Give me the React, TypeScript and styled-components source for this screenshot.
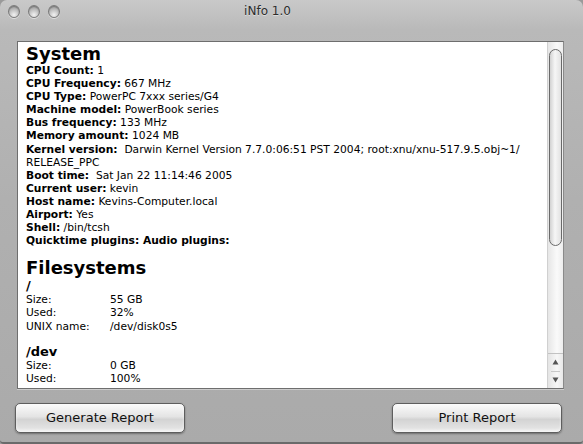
import React from 'react';
import styled, { createGlobalStyle } from 'styled-components';

const GlobalStyle = createGlobalStyle`
  html, body {
    margin: 0;
    padding: 0;
    background: #9a9a9a;
  }
  body {
    font-family: "DejaVu Sans", "Liberation Sans", sans-serif;
  }
`;

interface InfoRow {
  label: string;
  value: string;
  gap?: boolean;
}

const systemRows: InfoRow[] = [
  { label: 'CPU Count:', value: '1' },
  { label: 'CPU Frequency:', value: '667 MHz' },
  { label: 'CPU Type:', value: 'PowerPC 7xxx series/G4' },
  { label: 'Machine model:', value: 'PowerBook series' },
  { label: 'Bus frequency:', value: '133 MHz' },
  { label: 'Memory amount:', value: '1024 MB' },
];

const systemRowsAfter: InfoRow[] = [
  { label: 'Boot time:', value: 'Sat Jan 22 11:14:46 2005', gap: true },
  { label: 'Current user:', value: 'kevin' },
  { label: 'Host name:', value: 'Kevins-Computer.local' },
  { label: 'Airport:', value: 'Yes' },
  { label: 'Shell:', value: '/bin/tcsh' },
  { label: 'Quicktime plugins: Audio plugins:', value: '' },
];

interface Volume {
  mount: string;
  size: string;
  used: string;
  unix?: string;
}

const volumes: Volume[] = [
  { mount: '/', size: '55 GB', used: '32%', unix: '/dev/disk0s5' },
  { mount: '/dev', size: '0 GB', used: '100%' },
];

const App: React.FC = () => {
  return (
    <>
      <GlobalStyle />
      <Window>
        <TitleBar>
          <Lights>
            <Light />
            <Light />
            <Light />
          </Lights>
          <Title>iNfo 1.0</Title>
        </TitleBar>
        <Body>
          <TextView>
            <Scroller>
              <Heading>System</Heading>
              {systemRows.map((row) => (
                <Line key={row.label}>
                  <b>{row.label}</b> {row.value}
                </Line>
              ))}
              <Line>
                <b>Kernel version:</b>&nbsp; Darwin Kernel Version 7.7.0:06:51 PST 2004; root:xnu/xnu-517.9.5.obj~1/
                <br />
                RELEASE_PPC
              </Line>
              {systemRowsAfter.map((row) => (
                <Line key={row.label}>
                  <b>{row.label}</b>
                  {row.gap ? '\u00a0 ' : ' '}
                  {row.value}
                </Line>
              ))}
              <Heading $top={11}>Filesystems</Heading>
              {volumes.map((v, i) => (
                <VolumeBlock key={v.mount} $first={i === 0}>
                  <Mount>{v.mount}</Mount>
                  <Table>
                    <Cell>Size:</Cell>
                    <Cell>{v.size}</Cell>
                    <Cell>Used:</Cell>
                    <Cell>{v.used}</Cell>
                    {v.unix && (
                      <>
                        <Cell>UNIX name:</Cell>
                        <Cell>{v.unix}</Cell>
                      </>
                    )}
                  </Table>
                </VolumeBlock>
              ))}
            </Scroller>
            <ScrollBar>
              <Track>
                <Thumb />
              </Track>
              <Arrows>
                <Arrow>
                  <svg width="7" height="6" viewBox="0 0 7 6">
                    <path d="M3.5 0.5 L6.5 5.5 L0.5 5.5 Z" fill="#555" />
                  </svg>
                </Arrow>
                <ArrowDivider />
                <Arrow>
                  <svg width="7" height="6" viewBox="0 0 7 6">
                    <path d="M0.5 0.5 L6.5 0.5 L3.5 5.5 Z" fill="#555" />
                  </svg>
                </Arrow>
              </Arrows>
            </ScrollBar>
          </TextView>
          <ButtonRow>
            <AquaButton>Generate Report</AquaButton>
            <AquaButton>Print Report</AquaButton>
          </ButtonRow>
        </Body>
      </Window>
    </>
  );
};

const Window = styled.div`
  width: 583px;
  height: 444px;
  box-sizing: border-box;
  display: flex;
  flex-direction: column;
  background: linear-gradient(180deg, #c9c9c9 0px, #b9b9b9 30px, #b0b0b0 200px, #aaaaaa 444px);
  border-radius: 7px 7px 4px 4px;
  border-bottom: 2px solid #6a6a6a;
  overflow: hidden;
`;

const TitleBar = styled.div`
  height: 22px;
  display: flex;
  align-items: center;
  padding: 0 0 0 8px;
  flex-shrink: 0;
`;

const Lights = styled.div`
  display: flex;
  gap: 8px;
  width: 56px;
`;

const Light = styled.div`
  width: 12px;
  height: 13px;
  border-radius: 50%;
  box-sizing: border-box;
  border: 1px solid #7c7c7c;
  background: radial-gradient(circle at 50% 80%, #f2f2f2 0%, #c4c4c4 45%, #8f8f8f 100%);
  box-shadow: inset 0 1px 1px rgba(0, 0, 0, 0.25), 0 1px 0 rgba(255, 255, 255, 0.5);
`;

const Title = styled.div`
  flex: 1;
  text-align: center;
  padding-right: 112px;
  font-size: 12px;
  color: #2c2c2c;
  text-shadow: 0 1px 0 rgba(255, 255, 255, 0.45);
`;

const Body = styled.div`
  flex: 1;
  display: flex;
  flex-direction: column;
  padding: 19px 19px 0 17px;
`;

const TextView = styled.div`
  height: 346px;
  display: flex;
  background: #ffffff;
  border: 1px solid #6e6e6e;
  border-right-color: #8a8a8a;
  box-shadow: 0 1px 0 rgba(255, 255, 255, 0.4);
  overflow: hidden;
`;

const Scroller = styled.div`
  flex: 1;
  padding: 2px 0 0 8px;
  overflow: hidden;
  color: #000;
  font-size: 10.7px;
  line-height: 13.1px;
`;

const Heading = styled.div<{ $top?: number }>`
  font-size: 18px;
  font-weight: bold;
  line-height: 20px;
  margin-top: ${(p) => p.$top ?? 0}px;
`;

const Line = styled.div`
  white-space: nowrap;
  b {
    font-weight: bold;
  }
`;

const VolumeBlock = styled.div<{ $first: boolean }>`
  margin-top: ${(p) => (p.$first ? 0 : 11)}px;
`;

const Mount = styled.div`
  font-size: 13px;
  font-weight: bold;
  line-height: 15px;
`;

const Table = styled.div`
  display: grid;
  grid-template-columns: 84px auto;
`;

const Cell = styled.div`
  white-space: nowrap;
`;

const ScrollBar = styled.div`
  width: 15px;
  display: flex;
  flex-direction: column;
  background: linear-gradient(90deg, #e6e6e6, #fafafa 60%, #ededed);
  border-left: 1px solid #d0d0d0;
`;

const Track = styled.div`
  flex: 1;
  padding: 7px 0 0 0;
`;

const Thumb = styled.div`
  height: 197px;
  margin: 0 1px;
  box-sizing: border-box;
  border: 1px solid #6a6a6a;
  border-radius: 7px;
  background: linear-gradient(90deg, #d2d2d2, #f6f6f6 45%, #e2e2e2);
`;

const Arrows = styled.div`
  height: 34px;
  display: flex;
  flex-direction: column;
  border-top: 1px solid #c2c2c2;
  background: linear-gradient(90deg, #e4e4e4, #f7f7f7 60%, #e8e8e8);
`;

const Arrow = styled.div`
  flex: 1;
  display: flex;
  align-items: center;
  justify-content: center;
`;

const ArrowDivider = styled.div`
  height: 1px;
  margin: 0 3px;
  background: #c8c8c8;
`;

const ButtonRow = styled.div`
  display: flex;
  justify-content: space-between;
  margin: 14px 2px 0 -2px;
`;

const AquaButton = styled.button`
  width: 170px;
  height: 30px;
  box-sizing: border-box;
  border: 1px solid #5e5e5e;
  border-radius: 5px;
  background: linear-gradient(180deg, #fbfbfb 0%, #e4e4e4 45%, #d3d3d3 55%, #e9e9e9 100%);
  box-shadow: 0 1px 2px rgba(0, 0, 0, 0.35), inset 0 -2px 3px rgba(255, 255, 255, 0.6);
  font-family: "DejaVu Sans", "Liberation Sans", sans-serif;
  font-size: 13px;
  color: #111;
  padding: 0 0 1px 0;
`;

export default App;
